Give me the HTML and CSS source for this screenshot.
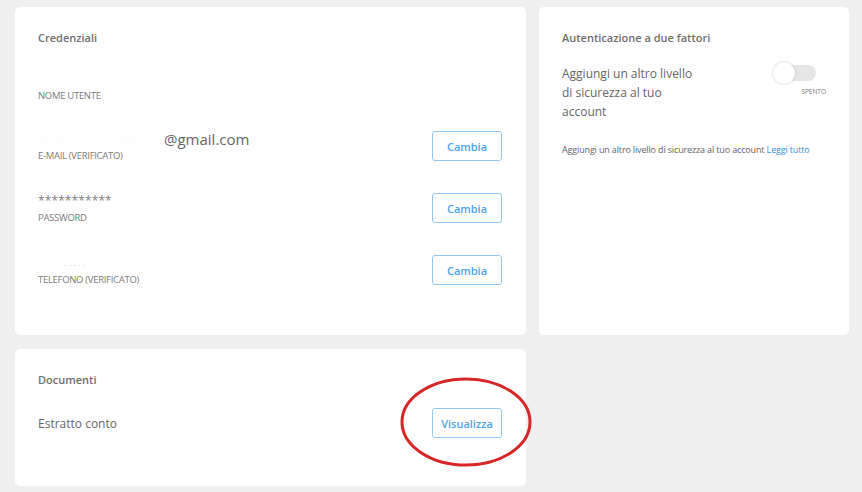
FILE: index.html
```html
<!DOCTYPE html>
<html lang="it">
<head>
    <meta charset="UTF-8">
    <meta name="viewport" content="width=device-width, initial-scale=1.0">
    <title>Sicurezza account</title>
    <link rel="stylesheet" href="styles.css">
</head>
<body>
    <div class="page">
        <div class="card credentials">
            <div class="card-title">Credenziali</div>
            <div class="field-label username">NOME UTENTE</div>

            <div class="row">
                <div class="info">
                    <div class="value email"><span class="redacted">mario.rossi.80</span>@gmail.com</div>
                    <div class="field-label">E-MAIL (VERIFICATO)</div>
                </div>
                <button class="btn">Cambia</button>
            </div>

            <div class="row">
                <div class="info">
                    <div class="value secret">***********</div>
                    <div class="field-label">PASSWORD</div>
                </div>
                <button class="btn">Cambia</button>
            </div>

            <div class="row">
                <div class="info">
                    <div class="value phone"><span class="faded">. . . . .</span></div>
                    <div class="field-label">TELEFONO (VERIFICATO)</div>
                </div>
                <button class="btn">Cambia</button>
            </div>
        </div>

        <div class="card two-factor">
            <div class="card-title">Autenticazione a due fattori</div>
            <div class="tf-row">
                <div class="tf-text">Aggiungi un altro livello<br>di sicurezza al tuo<br>account</div>
                <div class="toggle-group">
                    <div class="switch"><span class="knob"></span></div>
                    <div class="switch-label">SPENTO</div>
                </div>
            </div>
            <p class="tf-note">Aggiungi un altro livello di sicurezza al tuo account <a href="#">Leggi tutto</a></p>
        </div>

        <div class="card documents">
            <div class="card-title">Documenti</div>
            <div class="doc-row">
                <div class="doc-name">Estratto conto</div>
                <button class="btn">Visualizza</button>
            </div>
            <svg class="highlight" width="134" height="92" viewBox="0 0 134 92">
                <ellipse cx="67" cy="46" rx="64" ry="43" fill="none" stroke="#d62626" stroke-width="3"/>
            </svg>
        </div>
    </div>
</body>
</html>
```

FILE: styles.css
```css
body {
    margin: 0;
    padding: 0;
    background-color: #efefef;
    font-family: "Open Sans", "Liberation Sans", sans-serif;
    color: #666;
}

.page {
    display: grid;
    grid-template-columns: 511px 310px;
    grid-template-rows: 328px 137px;
    gap: 14px 13px;
    padding: 7px 0 0 15px;
}

.card {
    background-color: #fff;
    border-radius: 5px;
    padding: 23px 24px 0 23px;
    position: relative;
}

.card-title {
    font-size: 11px;
    font-weight: 600;
    line-height: 16px;
    color: #6e6e6e;
}

.field-label {
    font-size: 9.5px;
    line-height: 14px;
    color: #7c7c7c;
    letter-spacing: -0.3px;
}

.username {
    margin-top: 43px;
    margin-bottom: 12px;
}

.row {
    height: 62px;
    display: flex;
    align-items: center;
    justify-content: space-between;
}

.info {
    display: flex;
    flex-direction: column;
}

.value {
    height: 20px;
    line-height: 20px;
    color: #666;
}

.email {
    font-size: 15px;
}

.redacted {
    display: inline-block;
    width: 126px;
    overflow: hidden;
    color: #fdfdfd;
    vertical-align: top;
}

.secret {
    font-size: 12px;
    letter-spacing: 0.1px;
    color: #808080;
}

.phone {
    font-size: 9px;
    padding-left: 26px;
}

.faded {
    color: #d0d0d0;
}

.btn {
    width: 70px;
    height: 30px;
    background-color: #fff;
    border: 1px solid #94c8f4;
    border-radius: 3px;
    color: #4ea3ec;
    font-family: inherit;
    font-size: 11px;
    font-weight: 600;
    cursor: pointer;
    padding: 0;
}

.two-factor {
    padding-right: 23px;
}

.tf-row {
    display: flex;
    justify-content: space-between;
    align-items: flex-start;
    margin-top: 18px;
}

.tf-text {
    font-size: 12px;
    line-height: 19px;
    color: #666;
}

.toggle-group {
    display: flex;
    flex-direction: column;
    align-items: flex-end;
    margin-top: -2px;
}

.switch {
    position: relative;
    width: 33px;
    height: 16px;
    margin: 3px 10px 0 0;
    border-radius: 8px;
    background-color: #e6e6e6;
}

.knob {
    position: absolute;
    left: -10px;
    top: -3px;
    width: 22px;
    height: 22px;
    border-radius: 50%;
    background-color: #fff;
    box-shadow: 0 0 2px rgba(0, 0, 0, 0.25);
}

.switch-label {
    margin-top: 6px;
    font-size: 6.5px;
    color: #777;
}

.tf-note {
    margin: 23px 0 0;
    font-size: 9px;
    line-height: 12px;
    color: #666;
    letter-spacing: -0.15px;
}

.tf-note a {
    color: #3d8fd6;
    text-decoration: none;
}

.doc-row {
    display: flex;
    justify-content: space-between;
    align-items: center;
    margin-top: 20px;
}

.doc-name {
    font-size: 12px;
    color: #666;
}

.highlight {
    position: absolute;
    left: 384px;
    top: 27px;
}
```
